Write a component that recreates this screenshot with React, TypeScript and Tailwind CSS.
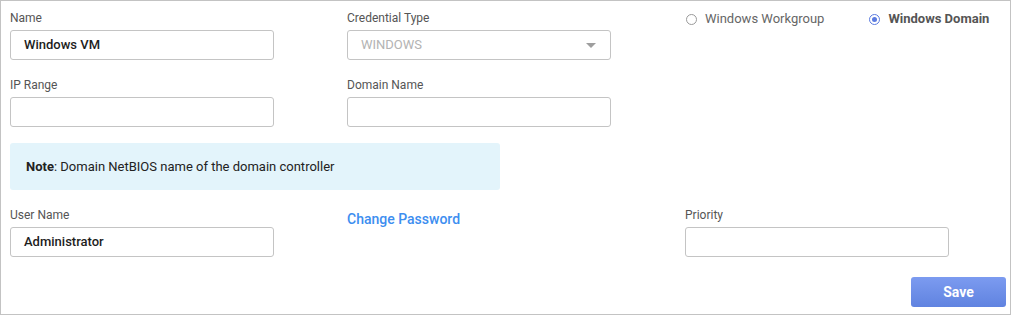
import React from "react";

const Label = ({ children }: { children: React.ReactNode }) => (
  <div className="text-[12px] leading-[16px] text-[#555] mb-[4px]">{children}</div>
);

const Input = ({ value }: { value?: string }) => (
  <div className="h-[30px] w-[264px] rounded-[3px] border border-[#c4c4c4] bg-white px-[13px] flex items-center text-[13px] font-medium text-[#1d1d1d]">
    {value}
  </div>
);

const Radio = ({ checked, label }: { checked?: boolean; label: string }) => (
  <div className="flex items-center gap-[8px]">
    <span
      className={`w-[11px] h-[11px] rounded-full border flex items-center justify-center ${
        checked ? "border-[#5b7be0]" : "border-[#9a9a9a]"
      }`}
    >
      {checked && <span className="w-[5px] h-[5px] rounded-full bg-[#5b7be0]" />}
    </span>
    <span className={`text-[13px] ${checked ? "font-bold text-[#555]" : "text-[#666]"}`}>{label}</span>
  </div>
);

export default function App() {
  return (
    <div
      className="w-[1011px] h-[315px] border border-[#c3c3c3] bg-white pl-[9px] pt-[9px]"
      style={{ fontFamily: "Roboto, 'Liberation Sans', sans-serif" }}
    >
      {/* Row 1 */}
      <div className="flex">
        <div className="w-[337px]">
          <Label>Name</Label>
          <Input value="Windows VM" />
        </div>
        <div className="w-[338px]">
          <Label>Credential Type</Label>
          <div className="h-[30px] w-[264px] rounded-[3px] border border-[#c4c4c4] bg-white pl-[13px] pr-[14px] flex items-center justify-between text-[13px] text-[#b3b3b3]">
            WINDOWS
            <svg width="10" height="5" viewBox="0 0 10 5">
              <path d="M0 0 L10 0 L5 5 Z" fill="#9e9e9e" />
            </svg>
          </div>
        </div>
        <div className="flex gap-[45px] pl-[1px] pt-[1px] h-[17px]">
          <Radio label="Windows Workgroup" />
          <Radio checked label="Windows Domain" />
        </div>
      </div>

      {/* Row 2 */}
      <div className="flex mt-[17px]">
        <div className="w-[337px]">
          <Label>IP Range</Label>
          <Input />
        </div>
        <div className="w-[338px]">
          <Label>Domain Name</Label>
          <Input />
        </div>
      </div>

      {/* Note */}
      <div className="mt-[16px] w-[490px] h-[47px] rounded-[3px] bg-[#e3f4fb] pl-[16px] flex items-center text-[13px] text-[#222]">
        <span className="font-bold">Note</span>: Domain NetBIOS name of the domain controller
      </div>

      {/* Row 3 */}
      <div className="flex mt-[17px]">
        <div className="w-[337px]">
          <Label>User Name</Label>
          <Input value="Administrator" />
        </div>
        <div className="w-[338px]">
          <a className="text-[14px] font-medium text-[#3d8ef0] cursor-pointer">Change Password</a>
        </div>
        <div>
          <Label>Priority</Label>
          <Input />
        </div>
      </div>

      {/* Save */}
      <div className="flex justify-end pr-[4px] mt-[20px]">
        <button className="w-[95px] h-[30px] rounded-[3px] bg-gradient-to-b from-[#7c9bf0] to-[#6083e0] text-white font-bold text-[14px]">
          Save
        </button>
      </div>
    </div>
  );
}
